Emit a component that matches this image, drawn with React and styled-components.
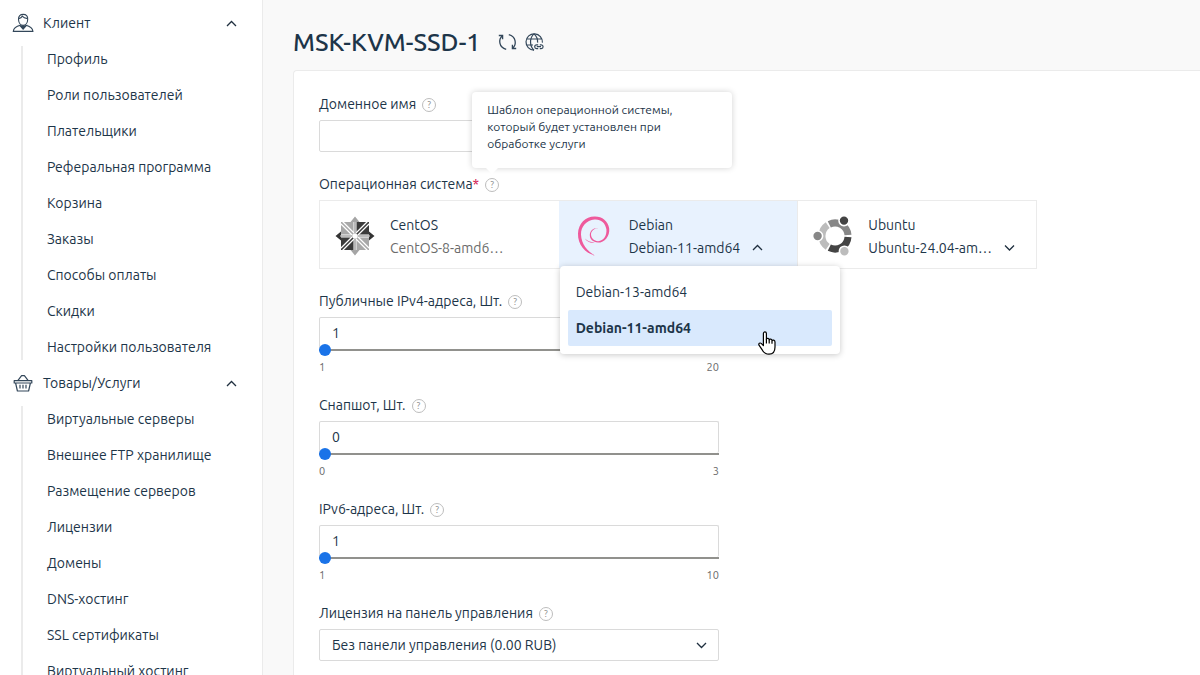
import React, { useState } from 'react';
import styled, { createGlobalStyle, css } from 'styled-components';

const colors = {
  text: '#1d3549',
  muted: '#6b6b6b',
  border: '#dadada',
  line: '#ebebeb',
  accent: '#1a73e8',
};

const GlobalStyle = createGlobalStyle`
  * {
    box-sizing: border-box;
  }

  body {
    margin: 0;
    background: #f9f9f9;
    color: ${colors.text};
    font: 14px/20px Ubuntu, 'Noto Sans', sans-serif;
  }

  button, input, select {
    font: inherit;
    color: inherit;
  }
`;

const Page = styled.div`
  display: flex;
  height: 100vh;
  overflow: hidden;
`;

const Sidebar = styled.nav`
  flex: 0 0 263px;
  padding-top: 5px;
  overflow: hidden;
  background: #fff;
  border-right: 1px solid ${colors.line};
`;

const GroupToggle = styled.button`
  display: flex;
  align-items: center;
  width: 100%;
  height: 36px;
  padding: 0 25px 0 12px;
  gap: 9px;
  border: 0;
  background: none;
  cursor: pointer;
`;

const GroupTitle = styled.span`
  flex: 1;
  text-align: left;
`;

const GroupList = styled.ul`
  display: flex;
  flex-direction: column;
  gap: 10px;
  margin: 5px 0 5px 21px;
  padding: 0 0 0 24px;
  list-style: none;
  border-left: 2px solid ${colors.line};
`;

const GroupLink = styled.a`
  display: block;
  line-height: 26px;
  color: inherit;
  text-decoration: none;
  white-space: nowrap;
`;

const Content = styled.main`
  flex: 1;
  min-width: 0;
  display: flex;
  flex-direction: column;
  padding-left: 30px;
`;

const Header = styled.header`
  display: flex;
  align-items: center;
  gap: 8px;
  height: 70px;
  padding-top: 14px;
`;

const Title = styled.h1`
  margin: 0 10px 0 0;
  font-size: 25px;
  line-height: 32px;
  font-weight: 500;
`;

const IconButton = styled.button`
  display: flex;
  padding: 0;
  border: 0;
  background: none;
  cursor: pointer;
`;

const Card = styled.form`
  flex: 1;
  display: flex;
  flex-direction: column;
  gap: 22px;
  padding: 23px 25px;
  overflow: hidden;
  background: #fff;
  border: 1px solid ${colors.line};
  border-width: 1px 0 0 1px;
  border-radius: 4px 0 0 0;
`;

const Field = styled.div`
  display: flex;
  flex-direction: column;
  gap: 6px;
  max-width: ${props => (props.$wide ? '718px' : '400px')};
`;

const LabelRow = styled.div`
  display: flex;
  align-items: center;
  gap: 6px;
`;

const Required = styled.span`
  color: #d0104c;
`;

const HelpWrap = styled.span`
  position: relative;
  display: flex;
  margin-top: 2px;
`;

const HelpButton = styled.button`
  width: 14px;
  height: 14px;
  padding: 0;
  border: 1px solid #bdbdbd;
  border-radius: 50%;
  background: none;
  color: #8c8c8c;
  font-size: 9px;
  line-height: 12px;
  cursor: help;
`;

const Tooltip = styled.span`
  position: absolute;
  z-index: 2;
  bottom: calc(100% + 10px);
  left: -13px;
  width: 260px;
  padding: 9px 15px 16px;
  border-radius: 4px;
  background: #fff;
  box-shadow: 0 0 6px rgba(0, 0, 0, 0.18);
  font-size: 12px;
  line-height: 17px;

  &::after {
    content: '';
    position: absolute;
    top: 100%;
    left: 14px;
    border: 6px solid transparent;
    border-top-color: #fff;
  }
`;

const inputBox = css`
  width: 100%;
  height: 32px;
  padding: 0 12px;
  background: #fff;
  border: 1px solid ${colors.border};
  border-radius: 2px;
  outline: 0;
`;

const TextInput = styled.input`
  ${inputBox}
`;

const NumberInput = styled.input`
  ${inputBox}
  padding-bottom: 2px;
  border-bottom: 0;
`;

const Range = styled.input`
  display: block;
  appearance: none;
  width: 100%;
  height: 12px;
  margin: -5px 0 5px;
  background: linear-gradient(#91918d, #91918d) center / 100% 2px no-repeat;

  &::-webkit-slider-thumb {
    appearance: none;
    width: 12px;
    height: 12px;
    border-radius: 50%;
    background: ${colors.accent};
  }
`;

const Limits = styled.div`
  display: flex;
  justify-content: space-between;
  color: ${colors.muted};
  font-size: 11px;
  line-height: 12px;
`;

const SelectWrap = styled.div`
  position: relative;
`;

const Select = styled.select`
  ${inputBox}
  appearance: none;
`;

const SelectArrow = styled.span`
  position: absolute;
  top: 50%;
  right: 12px;
  display: flex;
  transform: translateY(-50%);
  pointer-events: none;
`;

const OsList = styled.div`
  display: grid;
  grid-template-columns: repeat(3, 1fr);
  border: 1px solid ${colors.line};
`;

const OsCell = styled.div`
  position: relative;
  background: ${props => (props.$active ? '#e8f2fe' : '#fff')};

  &:last-child {
    border-left: 1px solid ${colors.line};
  }
`;

const OsButton = styled.button`
  display: flex;
  align-items: center;
  width: 100%;
  height: 67px;
  padding: 3px 15px 0;
  gap: 15px;
  border: 0;
  background: none;
  text-align: left;
  cursor: pointer;
`;

const OsText = styled.span`
  display: flex;
  flex-direction: column;
  gap: 3px;
  white-space: nowrap;
`;

const OsVersion = styled.span`
  display: flex;
  align-items: center;
  gap: 12px;
  color: ${props => (props.$muted ? colors.muted : 'inherit')};
`;

const Menu = styled.ul`
  position: absolute;
  z-index: 1;
  top: 65px;
  left: 1px;
  width: 280px;
  margin: 0;
  padding: 8px;
  list-style: none;
  border-radius: 4px;
  background: #fff;
  box-shadow: 0 1px 6px rgba(0, 0, 0, 0.22);
`;

const MenuItem = styled.li`
  position: relative;
  padding: 8px;
  border-radius: 2px;
  background: ${props => (props.$selected ? '#d9e9fd' : 'none')};
  font-weight: ${props => (props.$selected ? 700 : 400)};
  cursor: pointer;
`;

const Pointer = styled.svg`
  position: absolute;
  top: 21px;
  right: 56px;
`;

const Chevron = ({ up }) => (
  <svg width="11" height="11" viewBox="0 0 11 11" fill="none" stroke="#1f2f3f" strokeWidth="1.3">
    <path d={up ? 'M1 8 5.5 3.5 10 8' : 'M1 3.5 5.5 8 10 3.5'} />
  </svg>
);

const ClientIcon = () => (
  <svg width="22" height="20" viewBox="0 0 22 20" fill="none" stroke="#33475a" strokeWidth="1.1">
    <path d="M6.5 6.5C6.3 3 8.3 1.4 11.2 1.4S16 3.2 15.7 6.5C15.6 9.8 13.6 12.4 11.1 12.4S6.7 9.8 6.5 6.5Z" />
    <path d="M6.6 5.6C9 5.2 9.8 4.2 10.2 3.2C11.6 5 13.6 5.4 15.6 5.6" />
    <path d="M8.4 12.3C4 13.4 1.6 14.6 1.3 18.4H20.9C20.6 14.6 18.2 13.4 13.8 12.3" />
    <path d="M8 12.6 11.1 16.2 14.2 12.6 11.1 13.4Z" fill="#33475a" />
  </svg>
);

const BasketIcon = () => (
  <svg width="22" height="20" viewBox="0 0 22 20" fill="none" stroke="#33475a" strokeWidth="1.2" strokeLinejoin="round">
    <path d="M2.2 7.6H19.8V10H2.2ZM3.6 10 5.4 18H16.6L18.4 10M5.8 7.6 9.6 2.6H12.4L16.2 7.6" />
    <path d="M8 11.8V15.6M11 11.8V15.6M14 11.8V15.6" />
  </svg>
);

const RefreshIcon = () => (
  <svg width="19" height="18" viewBox="0 0 19 18" fill="none" stroke="#33475a" strokeWidth="1.3">
    <path d="M.8 2.5H4.6V6.3M4.4 2.8C.2 6.4.7 14.4 8.2 16.4" />
    <path d="M18.2 15.5H14.4V11.7M14.6 15.2C18.8 11.6 18.3 3.6 10.8 1.6" />
  </svg>
);

const GlobeIcon = () => (
  <svg width="19" height="18" viewBox="0 0 19 18" fill="none" stroke="#33475a" strokeWidth="1.2">
    <path d="M17.4 9.6A8.2 8.2 0 1 0 9 17.2M1.6 6H16.6M1.6 12H8" />
    <path d="M9 .9C4.4 5 4.4 13 9 17.2M9 .9C11.8 3.4 12.8 6.6 12.6 9.6" />
    <path d="M13.2 11.8H11.6A1.9 1.9 0 0 0 11.6 15.6H13.2M14.8 11.8H16.2A1.9 1.9 0 0 1 16.2 15.6H14.8M11.8 13.7H16" />
  </svg>
);

const CentosIcon = () => (
  <svg width="40" height="40" viewBox="0 0 40 40">
    <path d="M20 .5 24.5 6H15.5Z M20 39.5 15.5 34H24.5Z" fill="#a5a5a5" />
    <path d="M.5 20 6 15.5V24.5Z M39.5 20 34 24.5V15.5Z" fill="#333" />
    <path d="M6 6H18.5V18.5H6Z M21.5 21.5H34V34H21.5Z" fill="#a8a8a8" />
    <path d="M21.5 6H34V18.5H21.5Z M6 21.5H18.5V34H6Z" fill="#3b3b3b" />
    <path d="M7 7 33 33M33 7 7 33" stroke="#fff" strokeWidth="4" />
    <path d="M7 7 33 33M20 5V35M5 20H35" stroke="#a8a8a8" strokeWidth="1.6" />
    <path d="M33 7 7 33" stroke="#3b3b3b" strokeWidth="1.6" />
    <circle cx="20" cy="20" r="2.6" fill="#fff" />
  </svg>
);

const DebianIcon = () => (
  <svg width="40" height="40" viewBox="0 0 40 40" fill="#ee5a9c">
    <path d="M21 39.6C11 37.4 3.6 28.6 4 17.6C4.4 7.6 11.4.6 20.6.6C28 .4 34 5.2 35.2 12.4C36 20 30.6 26.6 24 26.6C19 26.4 15.6 23 15.8 18.8C16 14.8 19.4 11.4 24.4 12C20.4 12.2 17 15 17 18.6C17.2 22.6 20.6 25.4 24.2 25.2C29.6 24.8 33 19.4 32.4 13.2C31 6.4 26.4 3 20.4 3.6C12.6 4.2 6.8 10.6 7 18.6C7.4 28 13.2 35.6 21 39.6Z" />
    <path d="M10.8 22.6C14 25.4 17.4 26.6 21 26.4C17 27.6 13 26 10.8 22.6Z" />
  </svg>
);

const UbuntuIcon = () => (
  <svg width="40" height="40" viewBox="0 0 40 40" fill="none">
    <g strokeWidth="7">
      <path d="M16.3 8.3A13 13 0 0 1 35 19.1" stroke="#878787" />
      <path d="M35 20.9A13 13 0 0 1 16.3 31.7" stroke="#444" />
      <path d="M14.7 30.8A13 13 0 0 1 14.7 9.2" stroke="#bcbcbc" />
    </g>
    <g stroke="#fff" strokeWidth="1.6">
      <circle cx="31" cy="4.6" r="5" fill="#444" />
      <circle cx="4.6" cy="20" r="5" fill="#878787" />
      <circle cx="31.4" cy="35.2" r="5" fill="#bcbcbc" />
    </g>
  </svg>
);

const menuGroups = [
  {
    title: 'Клиент',
    Icon: ClientIcon,
    items: [
      'Профиль',
      'Роли пользователей',
      'Плательщики',
      'Реферальная программа',
      'Корзина',
      'Заказы',
      'Способы оплаты',
      'Скидки',
      'Настройки пользователя',
    ],
  },
  {
    title: 'Товары/Услуги',
    Icon: BasketIcon,
    items: [
      'Виртуальные серверы',
      'Внешнее FTP хранилище',
      'Размещение серверов',
      'Лицензии',
      'Домены',
      'DNS-хостинг',
      'SSL сертификаты',
      'Виртуальный хостинг',
    ],
  },
];

const Label = ({ id, text, required, tooltip }) => (
  <LabelRow>
    <label htmlFor={id}>
      {text}
      {required && <Required>*</Required>}
    </label>
    <HelpWrap>
      <HelpButton type="button">?</HelpButton>
      {tooltip && <Tooltip role="tooltip">{tooltip}</Tooltip>}
    </HelpWrap>
  </LabelRow>
);

const SliderField = ({ id, text, min, max, initial }) => {
  const [value, setValue] = useState(initial);
  const onChange = e => setValue(e.target.value);

  return (
    <Field>
      <Label id={id} text={text} />
      <div>
        <NumberInput id={id} value={value} onChange={onChange} inputMode="numeric" />
        <Range type="range" min={min} max={max} value={value} onChange={onChange} aria-label={text} />
        <Limits>
          <span>{min}</span>
          <span>{max}</span>
        </Limits>
      </div>
    </Field>
  );
};

const App = () => (
  <>
    <GlobalStyle />
    <Page>
      <Sidebar>
        {menuGroups.map(({ title, Icon, items }) => (
          <div key={title}>
            <GroupToggle type="button" aria-expanded="true">
              <Icon />
              <GroupTitle>{title}</GroupTitle>
              <Chevron up />
            </GroupToggle>
            <GroupList>
              {items.map(item => (
                <li key={item}>
                  <GroupLink href="#">{item}</GroupLink>
                </li>
              ))}
            </GroupList>
          </div>
        ))}
      </Sidebar>
      <Content>
        <Header>
          <Title>MSK-KVM-SSD-1</Title>
          <IconButton type="button"><RefreshIcon /></IconButton>
          <IconButton type="button"><GlobeIcon /></IconButton>
        </Header>
        <Card>
          <Field>
            <Label id="domain" text="Доменное имя" />
            <TextInput id="domain" type="text" />
          </Field>
          <Field $wide>
            <Label
              id="os"
              text="Операционная система"
              required
              tooltip="Шаблон операционной системы, который будет установлен при обработке услуги"
            />
            <OsList>
              <OsCell>
                <OsButton type="button">
                  <CentosIcon />
                  <OsText>
                    <span>CentOS</span>
                    <OsVersion $muted>CentOS-8-amd6…</OsVersion>
                  </OsText>
                </OsButton>
              </OsCell>
              <OsCell $active>
                <OsButton id="os" type="button" aria-haspopup="listbox" aria-expanded="true">
                  <DebianIcon />
                  <OsText>
                    <span>Debian</span>
                    <OsVersion>Debian-11-amd64 <Chevron up /></OsVersion>
                  </OsText>
                </OsButton>
                <Menu role="listbox">
                  <MenuItem role="option">Debian-13-amd64</MenuItem>
                  <MenuItem role="option" aria-selected="true" $selected>
                    Debian-11-amd64
                    <Pointer width="18" height="24" viewBox="0 0 18 24" fill="#fff" stroke="#000" strokeWidth="1.2" strokeLinejoin="round">
                      <path d="M5.4 14.6V2.6C5.4.4 8.4.4 8.4 2.6V8.2C8.8 6.8 11.2 7 11.2 8.8C11.8 7.6 14 8 14 9.6C14.8 8.6 17 9 17 11V16C17 20.6 14.6 23.2 11 23.2C7.4 23.2 6 21.8 4.4 19.2L1 14.2C.2 12.6 2 11.4 3.2 12.4Z" />
                      <path d="M8.4 8V12.4M11.2 8.8V12.4M14 9.8V12.8" fill="none" />
                    </Pointer>
                  </MenuItem>
                </Menu>
              </OsCell>
              <OsCell>
                <OsButton type="button" aria-haspopup="listbox">
                  <UbuntuIcon />
                  <OsText>
                    <span>Ubuntu</span>
                    <OsVersion>Ubuntu-24.04-am… <Chevron /></OsVersion>
                  </OsText>
                </OsButton>
              </OsCell>
            </OsList>
          </Field>
          <SliderField id="ipv4" text="Публичные IPv4-адреса, Шт." min={1} max={20} initial={1} />
          <SliderField id="snapshot" text="Снапшот, Шт." min={0} max={3} initial={0} />
          <SliderField id="ipv6" text="IPv6-адреса, Шт." min={1} max={10} initial={1} />
          <Field>
            <Label id="license" text="Лицензия на панель управления" />
            <SelectWrap>
              <Select id="license">
                <option>Без панели управления (0.00 RUB)</option>
              </Select>
              <SelectArrow><Chevron /></SelectArrow>
            </SelectWrap>
          </Field>
        </Card>
      </Content>
    </Page>
  </>
);

export default App;
